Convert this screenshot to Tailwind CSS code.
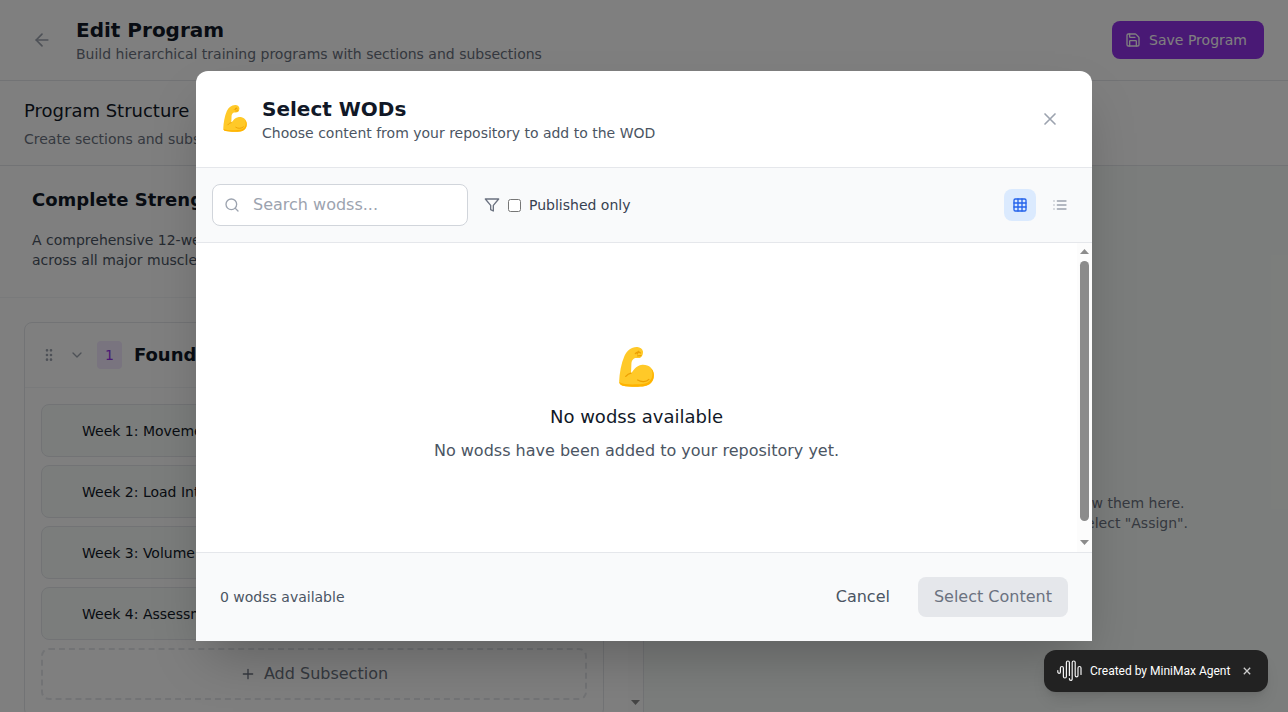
<!DOCTYPE html>
<html lang="en">
<head>
<meta charset="utf-8">
<title>Edit Program</title>
<script src="https://cdn.jsdelivr.net/npm/@tailwindcss/browser@4"></script>
</head>
<body class="h-[712px] w-[1288px] overflow-hidden bg-white font-['DejaVu_Sans',sans-serif] text-[#111827]">
<svg class="hidden">
  <symbol id="biceps" viewBox="0 0 105 121">
    <path fill="#ffc928" d="M0 104C1 80 6 50 16 27 24 10 36 1 53 0c9-.5 17 5 19 13 1 9-3 18-10 20-6 1-12-1-17 2-6 4-8 11-8 18l-1 26c8-6 12-22 34-25 20-1 34 11 35 31 1 20-12 31-30 34-16 2-46 2-64-2-8-2-11-7-11-14z"/>
    <path fill="#ffb300" d="M97 66c6 5 8 12 8 19 0 19-12 31-30 34-16 2-46 2-64-2-7-2-10-6-11-11 12 7 33 8 53 7 16-1 30-2 38-9 11-9 12-25 6-38z"/>
    <path fill="none" stroke="#eda002" stroke-width="4" stroke-linecap="round" d="M36 79c-5 1-11 4-16 10M56 100c11 7 26 6 34-2M49 20c4-6 12-6 15-2M56 27l10-1M58 13l-3 8"/>
  </symbol>
</svg>
<div class="relative h-[712px] overflow-hidden">
  <div class="flex h-full flex-col">
    <header class="flex h-[81px] shrink-0 items-center justify-between border-b border-[#e5e7eb] px-6">
      <div class="flex items-center gap-4">
        <button class="p-2 text-[#9ca3af]" aria-label="Back">
          <svg class="size-5" viewBox="0 0 24 24" fill="none" stroke="currentColor" stroke-width="2" stroke-linecap="round" stroke-linejoin="round"><path d="m12 19-7-7 7-7"/><path d="M19 12H5"/></svg>
        </button>
        <div>
          <h1 class="text-xl font-bold">Edit Program</h1>
          <p class="text-sm text-[#6b7280]">Build hierarchical training programs with sections and subsections</p>
        </div>
      </div>
      <button class="flex items-center rounded-lg border border-transparent bg-[#9333ea] px-4 py-2 text-sm font-medium text-white">
        <svg class="-ml-1 mr-2 size-4" viewBox="0 0 24 24" fill="none" stroke="currentColor" stroke-width="2" stroke-linecap="round" stroke-linejoin="round"><path d="M15.2 3a2 2 0 0 1 1.4.6l3.8 3.8a2 2 0 0 1 .6 1.4V19a2 2 0 0 1-2 2H5a2 2 0 0 1-2-2V5a2 2 0 0 1 2-2z"/><path d="M17 21v-7a1 1 0 0 0-1-1H8a1 1 0 0 0-1 1v7"/><path d="M7 3v4a1 1 0 0 0 1 1h7"/></svg>
        Save Program
      </button>
    </header>
    <div class="h-[85px] shrink-0 border-b border-[#e5e7eb] px-6 py-4">
      <h2 class="text-lg font-medium">Program Structure</h2>
      <p class="mt-1 text-sm text-[#6b7280]">Create sections and subsections</p>
    </div>
    <div class="flex min-h-0 flex-1">
      <div class="flex w-[644px] border-r border-[#e5e7eb]">
        <div class="w-[628px] overflow-hidden">
          <div class="h-[132px] border-b border-[#f3f4f6] px-8 pt-5">
            <h3 class="text-lg font-bold">Complete Strength</h3>
            <p class="mt-4 w-[240px] text-sm text-[#4b5563]">A comprehensive 12-week<br>across all major muscle</p>
          </div>
          <div class="px-6 pt-6">
            <section class="rounded-lg border border-[#e5e7eb]">
              <div class="flex h-[65px] items-center gap-3 border-b border-[#f3f4f6] px-4">
                <svg class="size-4 text-[#9ca3af]" viewBox="0 0 24 24" fill="none" stroke="currentColor" stroke-width="2"><circle cx="9" cy="12" r="1"/><circle cx="9" cy="5" r="1"/><circle cx="9" cy="19" r="1"/><circle cx="15" cy="12" r="1"/><circle cx="15" cy="5" r="1"/><circle cx="15" cy="19" r="1"/></svg>
                <svg class="size-4 text-[#9ca3af]" viewBox="0 0 24 24" fill="none" stroke="currentColor" stroke-width="2" stroke-linecap="round" stroke-linejoin="round"><path d="m6 9 6 6 6-6"/></svg>
                <span class="rounded bg-[#f3e8ff] px-2 py-1 text-sm font-medium text-[#9333ea]">1</span>
                <h4 class="text-lg font-bold">Foundation</h4>
              </div>
              <div class="space-y-2 p-4">
                <div class="flex h-[53px] items-center rounded-lg border border-[#e5e7eb] bg-[#f7fbf8] pl-10 text-sm font-medium">Week 1: Movement</div>
                <div class="flex h-[53px] items-center rounded-lg border border-[#e5e7eb] bg-[#f7fbf8] pl-10 text-sm font-medium">Week 2: Load Intro</div>
                <div class="flex h-[53px] items-center rounded-lg border border-[#e5e7eb] bg-[#f7fbf8] pl-10 text-sm font-medium">Week 3: Volume</div>
                <div class="flex h-[53px] items-center rounded-lg border border-[#e5e7eb] bg-[#f7fbf8] pl-10 text-sm font-medium">Week 4: Assessment</div>
                <button class="flex w-full items-center justify-center gap-2 rounded-lg border-2 border-dashed border-[#e5e7eb] py-3 text-base text-[#6b7280]">
                  <svg class="size-4" viewBox="0 0 24 24" fill="none" stroke="currentColor" stroke-width="2" stroke-linecap="round"><path d="M5 12h14M12 5v14"/></svg>
                  Add Subsection
                </button>
              </div>
            </section>
          </div>
        </div>
        <div class="flex w-[15px] flex-col items-center justify-end bg-[#fcfcfc] pb-[7px]">
          <svg class="h-[5px] w-[9px]" viewBox="0 0 9 5" fill="#8b8b8b"><path d="M0 0h9L4.500 5z"/></svg>
        </div>
      </div>
      <div class="flex-1 bg-[#f7fbf8] pt-[327px] text-right text-sm text-[#6b7280]">
        <p class="pr-[103.5px]">view them here.</p>
        <p class="pr-[100px]">select "Assign".</p>
      </div>
    </div>
  </div>

  <div class="absolute inset-0 flex items-center justify-center bg-black/50">
    <div class="flex h-[570px] w-[896px] flex-col rounded-xl bg-white shadow-2xl">
      <div class="flex h-[97px] shrink-0 items-center justify-between border-b border-[#e5e7eb] px-6">
        <div class="flex items-center gap-3">
          <span class="flex w-[30px] justify-center pb-[2px]"><svg class="h-[27px] w-6"><use href="#biceps"/></svg></span>
          <div>
            <h2 class="text-xl font-bold">Select WODs</h2>
            <p class="text-sm text-[#4b5563]">Choose content from your repository to add to the WOD</p>
          </div>
        </div>
        <button class="p-2 text-[#9ca3af]" aria-label="Close">
          <svg class="size-5" viewBox="0 0 24 24" fill="none" stroke="currentColor" stroke-width="2" stroke-linecap="round"><path d="M18 6 6 18M6 6l12 12"/></svg>
        </button>
      </div>
      <div class="flex h-[75px] shrink-0 items-center justify-between border-b border-[#e5e7eb] bg-[#f9fafb] px-4">
        <div class="flex items-center gap-4">
          <div class="flex h-[42px] w-64 items-center gap-[13px] rounded-lg border border-[#d1d5db] bg-white pl-[11px] text-base text-[#9ca3af]">
            <svg class="size-4" viewBox="0 0 24 24" fill="none" stroke="currentColor" stroke-width="2" stroke-linecap="round"><circle cx="11" cy="11" r="8"/><path d="m21 21-4.300-4.300"/></svg>
            <span>Search wodss...</span>
          </div>
          <label class="flex items-center gap-2 text-sm text-[#374151]">
            <svg class="size-4 text-[#6b7280]" viewBox="0 0 24 24" fill="none" stroke="currentColor" stroke-width="2" stroke-linejoin="round"><path d="M22 3H2l8 9.460V19l4 2v-8.540z"/></svg>
            <input type="checkbox" class="size-[13px]">
            <span>Published only</span>
          </label>
        </div>
        <div class="flex gap-2">
          <button class="rounded-lg bg-[#dbeafe] p-2 text-[#2563eb]" aria-label="Grid">
            <svg class="size-4" viewBox="0 0 24 24" fill="none" stroke="currentColor" stroke-width="2" stroke-linecap="round"><rect x="3" y="3" width="18" height="18" rx="2"/><path d="M3 9h18M3 15h18M9 3v18M15 3v18"/></svg>
          </button>
          <button class="p-2 text-[#9ca3af]" aria-label="List">
            <svg class="size-4" viewBox="0 0 24 24" fill="none" stroke="currentColor" stroke-width="2" stroke-linecap="round"><path d="M8 6h13M8 12h13M8 18h13M3 6h.01M3 12h.01M3 18h.01"/></svg>
          </button>
        </div>
      </div>
      <div class="flex min-h-0 flex-1">
        <div class="flex-1 pt-[104px] text-center">
          <div class="mb-4 flex h-10 justify-center"><svg class="h-10 w-[35px]"><use href="#biceps"/></svg></div>
          <h3 class="mb-2 text-lg font-medium">No wodss available</h3>
          <p class="text-[#4b5563]">No wodss have been added to your repository yet.</p>
        </div>
        <div class="flex w-[15px] flex-col items-center bg-[#fcfcfc] pt-[6px]">
          <svg class="h-[5px] w-[9px] shrink-0" viewBox="0 0 9 5" fill="#8b8b8b"><path d="M0 5h9L4.500 0z"/></svg>
          <div class="mt-[7px] h-[260px] w-[9px] shrink-0 rounded-full bg-[#8b8b8b]"></div>
          <svg class="mt-[19px] h-[5px] w-[9px] shrink-0" viewBox="0 0 9 5" fill="#8b8b8b"><path d="M0 0h9L4.500 5z"/></svg>
        </div>
      </div>
      <div class="flex h-[89px] shrink-0 items-center justify-between border-t border-[#e5e7eb] bg-[#f9fafb] px-6">
        <span class="text-sm text-[#4b5563]">0 wodss available</span>
        <div class="flex gap-3">
          <button class="px-4 py-2 text-[#4b5563]">Cancel</button>
          <button class="rounded-lg bg-[#e5e7eb] px-4 py-2 text-[#6b7280]">Select Content</button>
        </div>
      </div>
    </div>
  </div>

  <div class="absolute right-5 bottom-5 flex h-[42px] w-[224px] items-center rounded-xl bg-[#222222] pl-[13px] font-[Roboto,sans-serif] text-xs font-normal text-white shadow-lg">
    <svg class="h-[22px] w-[25px]" viewBox="0 0 25 22" fill="none" stroke="#f2f2f2" stroke-width="1.200" stroke-linecap="round" stroke-linejoin="round"><path d="M.8 10.500v1.500a1.300 1.300 0 0 0 2.600 0V8a1.500 1.500 0 0 1 3 0v8.500a1.500 1.500 0 0 0 3 0V2.500a1.500 1.500 0 0 1 3 0v13"/><path d="M12.400 18.500v.5a1.400 1.400 0 0 0 2.800 0V2.500a1.500 1.500 0 0 1 3 0V15.500a1.400 1.400 0 0 0 2.800 0V8a1.500 1.500 0 0 1 3 0v6.500"/></svg>
    <span class="ml-2 whitespace-nowrap">Created by MiniMax Agent</span>
    <svg class="ml-[13px] size-[8px]" viewBox="0 0 8 8" stroke="#ccc" stroke-width="1.300"><path d="m.8.8 6.400 6.400M7.200.8.8 7.200"/></svg>
  </div>
</div>
</body>
</html>
